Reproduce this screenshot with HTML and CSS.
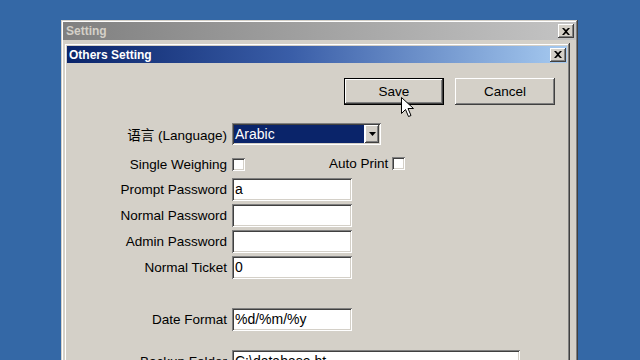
FILE: index.html
```html
<!DOCTYPE html>
<html>
<head>
  <meta charset="utf-8" />
  <title>Setting</title>
  <link rel="stylesheet" href="styles.css">
</head>
<body>
  <div class="desktop">
    <div class="window outer">
      <div class="titlebar inactive">
        <span class="title">Setting</span>
        <span class="close-btn">
          <svg width="8" height="7" viewBox="0 0 8 7"><path d="M0 0h2l2 2 2-2h2L5 3.5 8 7H6L4 5 2 7H0l3-3.5z" fill="#000"/></svg>
        </span>
      </div>
      <div class="client">
        <div class="window inner">
          <div class="titlebar active">
            <span class="title">Others Setting</span>
            <span class="close-btn">
              <svg width="8" height="7" viewBox="0 0 8 7"><path d="M0 0h2l2 2 2-2h2L5 3.5 8 7H6L4 5 2 7H0l3-3.5z" fill="#000"/></svg>
            </span>
          </div>

          <div class="form">
            <div class="actions">
              <button class="btn btn-default" type="button">Save</button>
              <button class="btn" type="button">Cancel</button>
            </div>

            <div class="row lang-row">
              <label class="label">语言 (Language)</label>
              <div class="combo">
                <span class="combo-value">Arabic</span>
                <span class="combo-arrow">
                  <svg width="7" height="4" viewBox="0 0 7 4"><path d="M0 0h7L3.5 4z" fill="#000"/></svg>
                </span>
              </div>
            </div>

            <div class="row check-row">
              <span class="label">Single Weighing</span>
              <span class="check-line">
                <span class="checkbox"></span>
                <span class="auto-print">Auto Print <span class="checkbox"></span></span>
              </span>
            </div>

            <div class="row field-row first">
              <span class="label">Prompt Password</span>
              <span class="input">a</span>
            </div>
            <div class="row field-row">
              <span class="label">Normal Password</span>
              <span class="input"></span>
            </div>
            <div class="row field-row">
              <span class="label">Admin Password</span>
              <span class="input"></span>
            </div>
            <div class="row field-row">
              <span class="label">Normal Ticket</span>
              <span class="input">0</span>
            </div>

            <div class="row field-row date-row">
              <span class="label">Date Format</span>
              <span class="input">%d/%m/%y</span>
            </div>

            <div class="row field-row backup-row">
              <span class="label">Backup Folder</span>
              <span class="input input-wide">C:\database.ht</span>
            </div>
          </div>
        </div>
      </div>
    </div>

    <svg class="cursor" width="13" height="21" viewBox="0 0 13 21">
      <path d="M0.5 0.5v16l4-4 3 7 2.5-1-3-7h5.5z" fill="#fff" stroke="#000" stroke-width="1"/>
    </svg>
  </div>
</body>
</html>
```

FILE: styles.css
```css
body {
  margin: 0;
  padding: 0;
  background-color: #3468a6;
  font-family: "Liberation Sans", Arial, "Noto Sans CJK SC", sans-serif;
  overflow: hidden;
}
.desktop {
  position: relative;
  width: 640px;
  height: 360px;
  overflow: hidden;
}
.window {
  box-sizing: border-box;
  background-color: #d4d0c8;
  box-shadow: inset -1px -1px #404040, inset 1px 1px #d4d0c8,
              inset -2px -2px #808080, inset 2px 2px #ffffff;
}
.outer {
  margin: 20px 0 0 61px;
  width: 517px;
  height: 360px;
  padding: 2px;
}
.inner {
  margin: 3px 0 0 1px;
  width: 506px;
  height: 330px;
  padding: 3px;
}
.titlebar {
  display: flex;
  align-items: center;
  justify-content: space-between;
  font-size: 12px;
  font-weight: bold;
}
.titlebar.inactive {
  height: 18px;
  padding: 0 2px 0 3px;
  background: linear-gradient(to right, #808080, #c4c4c4);
  color: #d4d0c8;
}
.titlebar.active {
  height: 17px;
  padding: 0 1px 0 2px;
  background: linear-gradient(to right, #0a246a, #3a5ea8 45%, #a6caf0);
  color: #ffffff;
}
.close-btn {
  display: flex;
  align-items: center;
  justify-content: center;
  width: 16px;
  height: 14px;
  background-color: #d4d0c8;
  box-shadow: inset -1px -1px #404040, inset 1px 1px #ffffff, inset -2px -2px #808080;
}
.form {
  display: flex;
  flex-direction: column;
  font-size: 13.5px;
  color: #000;
}
.actions {
  display: flex;
  justify-content: flex-end;
  gap: 11px;
  margin-top: 15px;
  padding-right: 12px;
}
.btn {
  box-sizing: border-box;
  width: 100px;
  height: 27px;
  padding: 0;
  border: 0;
  background-color: #d4d0c8;
  font-family: inherit;
  font-size: 13.5px;
  color: #000;
  box-shadow: inset -1px -1px #404040, inset 1px 1px #ffffff, inset -2px -2px #808080;
}
.btn-default {
  border: 1px solid #000;
  box-shadow: inset -1px -1px #404040, inset 1px 1px #ffffff, inset -2px -2px #808080;
}
.row {
  display: grid;
  grid-template-columns: 160px auto;
  column-gap: 5px;
  align-items: center;
  justify-content: start;
}
.label {
  text-align: right;
  white-space: nowrap;
}
.lang-row {
  margin-top: 18px;
}
.combo {
  box-sizing: border-box;
  display: flex;
  align-items: center;
  width: 149px;
  height: 22px;
  padding: 2px;
  background-color: #fff;
  box-shadow: inset 1px 1px #808080, inset -1px -1px #ffffff,
              inset 2px 2px #404040, inset -2px -2px #d4d0c8;
}
.combo-value {
  flex: 1;
  height: 18px;
  line-height: 18px;
  padding-left: 1px;
  background-color: #0a246a;
  color: #fff;
  font-size: 14px;
}
.combo-arrow {
  display: flex;
  align-items: center;
  justify-content: center;
  width: 14px;
  height: 18px;
  margin-left: 1px;
  background-color: #d4d0c8;
  box-shadow: inset -1px -1px #404040, inset 1px 1px #ffffff, inset -2px -2px #808080;
}
.check-row {
  margin-top: 12px;
  height: 13px;
}
.check-line {
  display: flex;
  align-items: center;
}
.checkbox {
  display: inline-block;
  box-sizing: border-box;
  width: 13px;
  height: 13px;
  background-color: #fff;
  box-shadow: inset 1px 1px #808080, inset -1px -1px #ffffff,
              inset 2px 2px #404040, inset -2px -2px #d4d0c8;
}
.auto-print {
  display: flex;
  align-items: center;
  gap: 4px;
  margin-left: 84px;
  margin-top: -2px;
}
.field-row {
  margin-top: 3px;
}
.field-row.first {
  margin-top: 8px;
}
.date-row {
  margin-top: 29px;
}
.backup-row {
  margin-top: 19px;
}
.input {
  box-sizing: border-box;
  display: block;
  width: 120px;
  height: 23px;
  padding: 0 3px;
  line-height: 23px;
  background-color: #fff;
  font-size: 14px;
  white-space: nowrap;
  overflow: hidden;
  box-shadow: inset 1px 1px #808080, inset -1px -1px #ffffff,
              inset 2px 2px #404040, inset -2px -2px #d4d0c8;
}
.input-wide {
  width: 288px;
}
.cursor {
  position: absolute;
  left: 401px;
  top: 97px;
}
```
